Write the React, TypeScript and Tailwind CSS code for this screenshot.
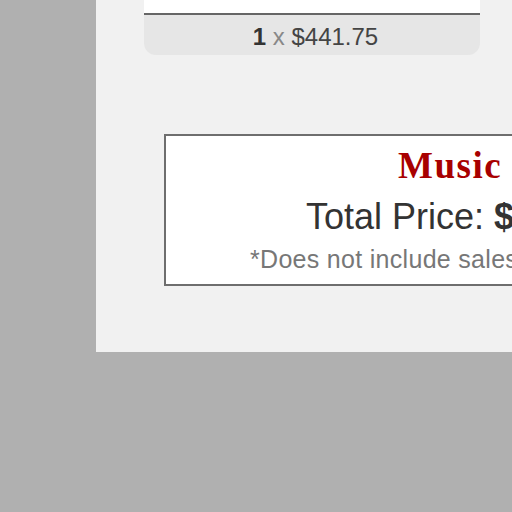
export default function App() {
  return (
    <div className="min-h-[512px] w-[512px] overflow-hidden bg-[#b0b0b0] font-['Liberation_Sans',Arial,sans-serif]">
      <div className="ml-[96px] h-[352px] w-[520px] bg-[#f1f1f1]">
        {/* cart item card */}
        <div className="ml-[48px] w-[336px]">
          <div className="h-[15px] border-b-2 border-[#666] bg-white" />
          <div className="h-[40px] rounded-b-[12px] bg-[#e6e6e6] pl-[7px] pt-[10px] text-center text-[24px] leading-none text-[#444]">
            <span className="font-bold text-[#333]">1</span>{" "}
            <span className="text-[#888]">x</span> $441.75
          </div>
        </div>

        {/* total box */}
        <div className="ml-[68px] mt-[79px] flex h-[152px] w-[600px] flex-col items-start border-2 border-[#6e6e6e] bg-white">
          <h2 className="ml-[232px] mt-[11px] font-['Liberation_Serif',Georgia,serif] text-[37px] font-bold leading-none tracking-[1.5px] text-[#a80000]">
            Music
          </h2>
          <p className="ml-[140px] mt-[15px] whitespace-nowrap text-[36px] leading-none text-[#333]">
            Total Price: <span className="font-bold">$441.75</span>
          </p>
          <p className="ml-[84px] mt-[12px] whitespace-nowrap text-[25px] leading-none tracking-[0.3px] text-[#777]">
            *Does not include sales tax.
          </p>
        </div>
      </div>
    </div>
  );
}
